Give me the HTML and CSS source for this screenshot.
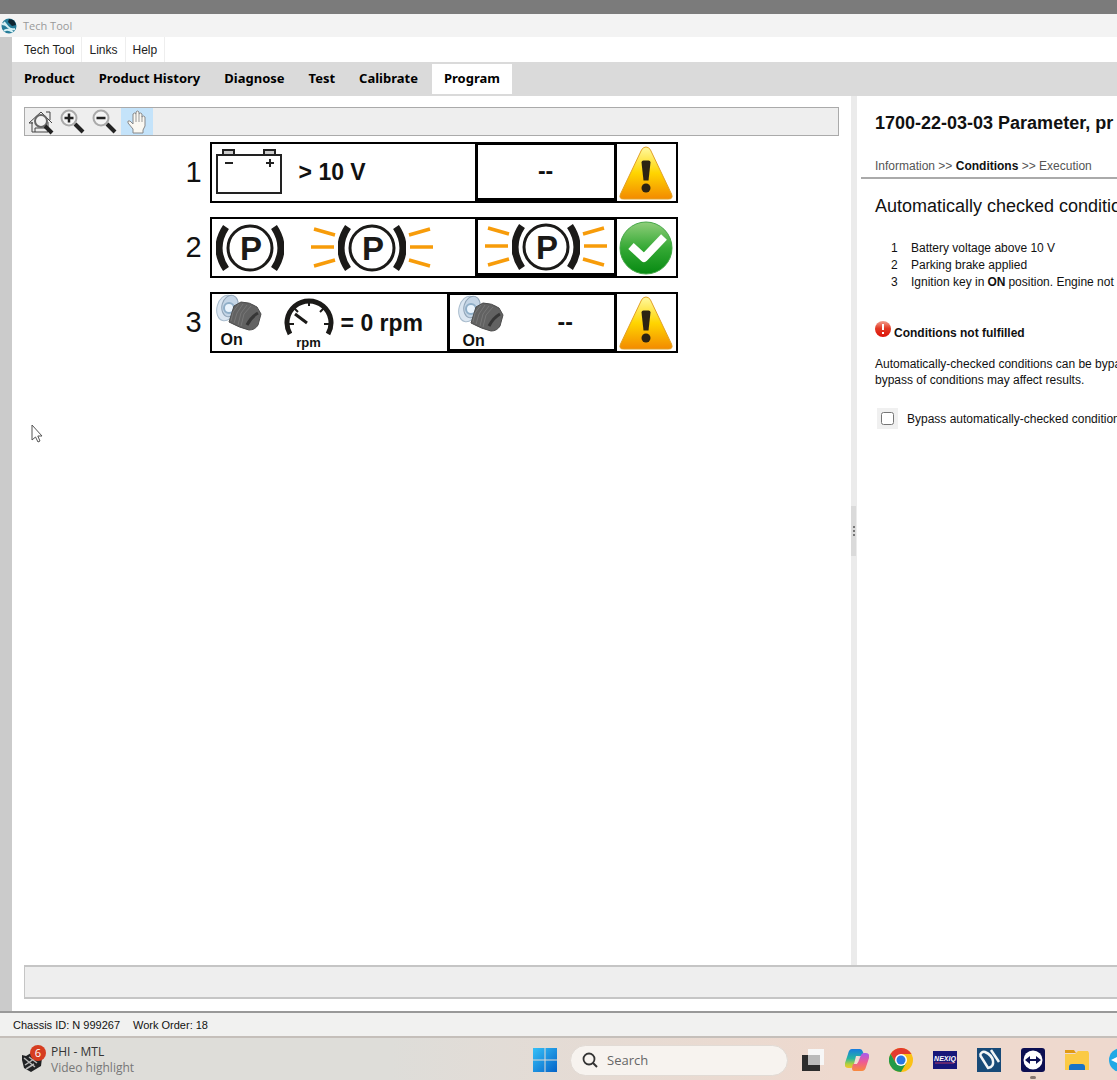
FILE: index.html
```html
<!DOCTYPE html>
<html lang="en">
  <head>
    <meta charset="UTF-8" />
    <meta name="viewport" content="width=device-width, initial-scale=1.0" />
    <title>Tech Tool</title>
    <link rel="stylesheet" href="styles.css">
  </head>
  <body>
    <!-- shared drawings -->
    <svg class="defs" width="0" height="0" aria-hidden="true">
      <defs>
        <linearGradient id="warnFill" x1="0" y1="0" x2="0" y2="1">
          <stop offset="0" stop-color="#fff9a0" />
          <stop offset="0.5" stop-color="#ffd500" />
          <stop offset="1" stop-color="#f38a00" />
        </linearGradient>
        <linearGradient id="okFill" x1="0" y1="0" x2="0" y2="1">
          <stop offset="0" stop-color="#8fce7a" />
          <stop offset="0.5" stop-color="#35a935" />
          <stop offset="1" stop-color="#078a12" />
        </linearGradient>
        <linearGradient id="redFill" x1="0" y1="0" x2="0" y2="1">
          <stop offset="0" stop-color="#f2a08f" />
          <stop offset="0.45" stop-color="#e33a25" />
          <stop offset="1" stop-color="#dc1208" />
        </linearGradient>
        <linearGradient id="winFill" x1="0" y1="0" x2="1" y2="1">
          <stop offset="0" stop-color="#36c0f7" />
          <stop offset="1" stop-color="#0463c8" />
        </linearGradient>
        <linearGradient id="copilotLeft" x1="0" y1="0" x2="0" y2="1">
          <stop offset="0" stop-color="#177be0" />
          <stop offset="0.5" stop-color="#27b5a0" />
          <stop offset="0.8" stop-color="#b5cf3c" />
          <stop offset="1" stop-color="#f7c52b" />
        </linearGradient>
        <linearGradient id="copilotRight" x1="0" y1="0" x2="0" y2="1">
          <stop offset="0" stop-color="#a45cf0" />
          <stop offset="0.5" stop-color="#ee5a94" />
          <stop offset="1" stop-color="#f98a3c" />
        </linearGradient>
        <symbol id="parking" viewBox="0 0 68 50">
          <circle cx="34" cy="25" r="22" fill="#fff" stroke="#1b1a18" stroke-width="3" />
          <path d="M10 4Q-4 25 10 46M58 4Q72 25 58 46" fill="none" stroke="#1b1a18" stroke-width="7" />
          <text x="35" y="37" text-anchor="middle" class="park-letter">P</text>
        </symbol>
        <symbol id="flashing" viewBox="0 0 122 50">
          <use href="#parking" x="27" y="0" width="68" height="50" />
          <path d="M3 6l21 6M0 24h23M3 43l21-6M119 6l-21 6M122 24h-23M119 43l-21-6" stroke="#f79c0a" stroke-width="3.500" />
        </symbol>
        <symbol id="ignition" viewBox="0 0 46 38">
          <ellipse cx="10" cy="14" rx="9" ry="13" transform="rotate(15 10 14)" fill="#dbe6f1" stroke="#a9bccd" />
          <ellipse cx="14" cy="12" rx="8" ry="11" transform="rotate(15 14 12)" fill="#c4d5e6" stroke="#8fa3b6" />
          <circle cx="13" cy="14" r="5" fill="#eaf4fd" stroke="#90afc8" stroke-width="2" />
          <path d="M18 12l7-4q9 0 16 5l4 7-3 11q-3 5-9 5-9-2-20-8z" fill="#626262" stroke="#4d4d4d" />
          <path d="M23 10l-6 8-2 9M27 10l-6 9-3 10M31 11l-6 8-3 12M35 12l-7 8-3 12" fill="none" stroke="#777" />
          <path d="M42 19q-7 4-11 12" fill="none" stroke="#363636" stroke-width="3" />
        </symbol>
        <symbol id="warning" viewBox="0 0 54 54">
          <path d="M27 1q3 0 4.500 3l21 44q2 5-3 5h-45q-5 0-3-5l21-44q1.500-3 4.500-3z" fill="url(#warnFill)" stroke="#e2a127" />
          <path d="M22.500 16.500q0-2 2-2h5q2 0 2 2l-2 18h-5z" fill="#2b2413" />
          <circle cx="27" cy="42" r="4.500" fill="#2b2413" />
        </symbol>
      </defs>
    </svg>

    <div class="backdrop"></div>
    <header class="titlebar">
      <svg width="16" height="16" viewBox="0 0 16 16" aria-hidden="true">
        <circle cx="8" cy="8" r="7.500" fill="#257b98" />
        <path d="M1 6q4 0 6 3t7 2M3 13q3-3 9 1M3 4l4 5" stroke="#d5f0f4" stroke-width="2" fill="none" />
        <path d="M8 1q6 0 7 6l-4 1-4-4z" fill="#102531" />
      </svg>
      <span>Tech Tool</span>
    </header>

    <div class="window">
      <nav class="menubar">
        <button type="button">Tech Tool</button>
        <button type="button">Links</button>
        <button type="button">Help</button>
      </nav>
      <nav class="tabs">
        <button type="button">Product</button>
        <button type="button">Product History</button>
        <button type="button">Diagnose</button>
        <button type="button">Test</button>
        <button type="button">Calibrate</button>
        <button type="button" class="active">Program</button>
      </nav>

      <main class="workspace">
        <section class="viewer">
          <div class="toolbar">
            <button type="button" aria-label="Fit to window">
              <svg width="26" height="26" viewBox="0 0 26 26">
                <path d="M1 14L13 3l11 11M4 13v10h16V13M18 3h4v8M1 14h4M7 23v-4h10" fill="none" stroke="#444" />
                <circle cx="13" cy="12" r="6" fill="#f3f3f3" stroke="#666" stroke-width="2" />
                <path d="M17 17l7 7" stroke="#222" stroke-width="4" />
              </svg>
            </button>
            <button type="button" aria-label="Zoom in">
              <svg width="26" height="26" viewBox="0 0 26 26">
                <circle cx="9" cy="9" r="7.500" fill="#f4f4f4" stroke="#aaa" stroke-width="2" />
                <path d="M4.500 9h9M9 4.500v9" stroke="#222" stroke-width="2.500" />
                <path d="M15 15l8 8" stroke="#222" stroke-width="4" />
              </svg>
            </button>
            <button type="button" aria-label="Zoom out">
              <svg width="26" height="26" viewBox="0 0 26 26">
                <circle cx="9" cy="9" r="7.500" fill="#f4f4f4" stroke="#aaa" stroke-width="2" />
                <path d="M4.500 9h9" stroke="#222" stroke-width="2.500" />
                <path d="M15 15l8 8" stroke="#222" stroke-width="4" />
              </svg>
            </button>
            <button type="button" class="selected" aria-label="Pan">
              <svg width="26" height="26" viewBox="0 0 26 26">
                <path d="M9 24v-4l-5-6q-1-3 2-2l3 3V5q1.500-2 3 0V3q1.500-2 3 0v2q1.500-2 3 0v3q1.500-2 3 0v9l-2 4v3z" fill="#faf8f2" stroke="#888" />
                <path d="M12 5v8M15 5v8M18 7v6" stroke="#999" />
              </svg>
            </button>
          </div>

          <div class="diagram">
            <div class="condition">
              <span class="number">1</span>
              <div class="strip">
                <div class="expected battery">
                  <svg width="66" height="48" viewBox="0 0 66 48" aria-hidden="true">
                    <path d="M7 6V1h11v5M48 6V1h11v5" fill="#ccc" stroke="#222" stroke-width="2" />
                    <path d="M1 6h64v38H1z" fill="#fff" stroke="#222" stroke-width="2" />
                    <path d="M9 14h8M50 14h8M54 10v8" stroke="#222" stroke-width="2" />
                  </svg>
                  <span>&gt; 10 V</span>
                </div>
                <div class="actual">--</div>
                <div class="state"><svg width="54" height="54"><use href="#warning" /></svg></div>
              </div>
            </div>

            <div class="condition">
              <span class="number">2</span>
              <div class="strip">
                <div class="expected brake">
                  <svg width="68" height="50"><use href="#parking" /></svg>
                  <svg width="122" height="50"><use href="#flashing" /></svg>
                </div>
                <div class="actual"><svg width="122" height="50"><use href="#flashing" /></svg></div>
                <div class="state">
                  <svg width="54" height="54" viewBox="0 0 54 54">
                    <circle cx="27" cy="27" r="26" fill="url(#okFill)" stroke="#45a747" />
                    <path d="M12 25l13 12 20-21" fill="none" stroke="#fff" stroke-width="8" stroke-linejoin="round" />
                  </svg>
                </div>
              </div>
            </div>

            <div class="condition">
              <span class="number">3</span>
              <div class="strip wide">
                <div class="expected engine">
                  <div class="key">
                    <svg width="46" height="38"><use href="#ignition" /></svg>
                    <span>On</span>
                  </div>
                  <div class="gauge">
                    <svg width="50" height="40" viewBox="0 0 50 40" aria-hidden="true">
                      <path d="M6 38A22 22 0 1 1 44 38" fill="none" stroke="#1b1a18" stroke-width="5" />
                      <path d="M25 4v6M10 12l4 4M40 12l-4 4M4 28h6M46 28h-6" stroke="#1b1a18" stroke-width="2" />
                      <path d="M11 18l12 9" stroke="#1b1a18" stroke-width="3" />
                    </svg>
                    <span>rpm</span>
                  </div>
                  <span>= 0 rpm</span>
                </div>
                <div class="actual">
                  <div class="key">
                    <svg width="46" height="38"><use href="#ignition" /></svg>
                    <span>On</span>
                  </div>
                  <span class="reading">--</span>
                </div>
                <div class="state"><svg width="54" height="54"><use href="#warning" /></svg></div>
              </div>
            </div>
          </div>
        </section>

        <div class="splitter"><div class="grip"><i></i><i></i><i></i></div></div>

        <aside class="details">
          <h1>1700-22-03-03 Parameter, pr</h1>
          <p class="steps"><a href="#">Information</a> &gt;&gt; <b>Conditions</b> &gt;&gt; <a href="#">Execution</a></p>
          <h2>Automatically checked conditio</h2>
          <ol>
            <li>Battery voltage above 10 V</li>
            <li>Parking brake applied</li>
            <li>Ignition key in <b>ON</b> position. Engine not</li>
          </ol>
          <p class="result">
            <svg width="16" height="16" viewBox="0 0 16 16" aria-hidden="true">
              <circle cx="8" cy="8" r="8" fill="url(#redFill)" />
              <path d="M8 3v6M8 11v2" stroke="#fff" stroke-width="2" />
            </svg>
            <b>Conditions not fulfilled</b>
          </p>
          <p class="note">Automatically-checked conditions can be bypa<br>bypass of conditions may affect results.</p>
          <div class="bypass">
            <span class="tick"><input type="checkbox" id="bypass"></span>
            <label for="bypass">Bypass automatically-checked condition</label>
          </div>
        </aside>
      </main>

      <div class="message"></div>
    </div>

    <footer class="status">
      <span>Chassis ID: N 999267</span>
      <span>Work Order: 18</span>
    </footer>

    <div class="taskbar">
      <a href="#" class="widget">
        <svg width="28" height="30" viewBox="0 0 28 30" aria-hidden="true">
          <path d="M2 10l4 1 5-3 7 1 4 4-1 8-10 6-7-4-2-8z" fill="#202224" />
          <path d="M4 13l11 9M5 20l12-8M9 12l8 6M6 24l8-5" stroke="#b8b8b8" stroke-width="1.500" />
          <circle cx="18" cy="8" r="8" fill="#d63d20" />
          <text x="18" y="12" text-anchor="middle">6</text>
        </svg>
        <span class="news">PHI - MTL<small>Video highlight</small></span>
      </a>
      <div class="apps">
        <button type="button" aria-label="Start">
          <svg width="24" height="24" viewBox="0 0 24 24"><path d="M0 0h11.500v11.500H0zM12.500 0H24v11.500H12.500zM0 12.500h11.500V24H0zM12.500 12.500H24V24H12.500z" fill="url(#winFill)" /></svg>
        </button>
        <div class="search">
          <svg width="16" height="16" viewBox="0 0 16 16" aria-hidden="true">
            <circle cx="7" cy="7" r="5.500" fill="none" stroke="#333" stroke-width="1.800" />
            <path d="M11 11l4 4" stroke="#333" stroke-width="2" />
          </svg>
          <input type="text" placeholder="Search" aria-label="Search">
        </div>
        <button type="button" aria-label="Task view">
          <svg width="24" height="24" viewBox="0 0 24 24"><path d="M1 7h18v16H1z" fill="#2c2c2c" /><path d="M7 1h16v16H7z" fill="#f7f7f7" /><path d="M7 7h12v10H7z" fill="#bababa" /></svg>
        </button>
        <button type="button" aria-label="Copilot">
          <svg width="24" height="24" viewBox="0 0 24 24">
            <path d="M7 1h8q2 0 3 3l1 4h-4q-3 0-4 4l-2 6q-1 2-3 2H3q-4 0-3-5l3-9q1-5 4-5z" fill="url(#copilotLeft)" />
            <path d="M17 23H9q-2 0-2-3l1-4h2q3 0 4-4l2-5q1-2 3-2h2q4 0 3 5l-3 9q-1 4-4 4z" fill="url(#copilotRight)" />
            <path d="M11 8h3l-2 8H9z" fill="#f1ddd3" />
          </svg>
        </button>
        <button type="button" aria-label="Chrome">
          <svg width="24" height="24" viewBox="0 0 24 24">
            <circle cx="12" cy="12" r="12" fill="#fbc116" />
            <path d="M1.600 6A12 12 0 0 1 22.400 6H12L6.800 15z" fill="#e33b2e" />
            <path d="M1.600 6A12 12 0 0 0 12 24L17.200 15H6.800z" fill="#229a49" />
            <circle cx="12" cy="12" r="6" fill="#fff" />
            <circle cx="12" cy="12" r="4.500" fill="#2b78e4" />
          </svg>
        </button>
        <button type="button" aria-label="Nexiq">
          <svg class="nexiq" width="24" height="24" viewBox="0 0 24 24"><path d="M0 3h24v18H0z" fill="#171779" /><text x="12" y="13" text-anchor="middle">NEXIQ</text><path d="M2 15h19" stroke="#b13a68" /></svg>
        </button>
        <button type="button" aria-label="Diagnostics">
          <svg width="24" height="24" viewBox="0 0 24 24"><path d="M0 0h24v24H0z" fill="#174a78" /><path d="M3 7l8 13q6-1 5-7T8 4q-3-1-5 3M14 2l8 12" fill="none" stroke="#f3f6f7" stroke-width="2.500" /></svg>
        </button>
        <button type="button" class="running" aria-label="Remote control">
          <svg width="24" height="24" viewBox="0 0 24 24"><rect width="24" height="24" rx="3" fill="#0b0f52" /><circle cx="12" cy="12" r="9.500" fill="#fff" /><path d="M4 12l5-4v3h6V8l5 4-5 4v-3H9v3z" fill="#0b0f52" /></svg>
        </button>
        <button type="button" aria-label="File explorer">
          <svg width="24" height="24" viewBox="0 0 24 24"><path d="M0 2h9l2 3h-11z" fill="#e09a15" /><path d="M0 6h10l3-3h10l1 2v17H0z" fill="#fbca45" /><path d="M4 22v-3q0-3 3-3h10q3 0 3 3v3z" fill="#1873c8" /></svg>
        </button>
        <button type="button" aria-label="Messages">
          <svg width="24" height="24" viewBox="0 0 24 24"><circle cx="12" cy="12" r="12" fill="#22a9e6" /><path d="M2 12l10-5v10z" fill="#fff" /></svg>
        </button>
      </div>
    </div>

    <svg class="cursor" width="12" height="19" viewBox="0 0 12 19" aria-hidden="true">
      <path d="M1 1v15l3.500-3 2.500 5 2-1-2.200-5H11z" fill="#fff" stroke="#555" />
    </svg>
  </body>
</html>
```
FILE: styles.css
```css
* {
  box-sizing: border-box;
}

body {
  margin: 0;
  min-height: 100vh;
  display: flex;
  flex-direction: column;
  overflow-x: hidden;
  background-color: #fff;
  color: #111;
  font-family: "Liberation Sans", Arial, sans-serif;
  font-size: 12px;
}

button {
  border: none;
  padding: 0;
  background: none;
  color: inherit;
  font: inherit;
  cursor: pointer;
}

svg {
  display: block;
  flex: none;
}

a {
  color: inherit;
  text-decoration: none;
}

.defs {
  position: absolute;
}

.park-letter {
  fill: #1b1a18;
  font: bold 33px "Liberation Sans", sans-serif;
}

.backdrop {
  height: 14px;
  background-color: #7b7b7b;
}

.titlebar {
  display: flex;
  align-items: center;
  gap: 6px;
  height: 23px;
  padding-left: 1px;
  background-color: #f3f3f3;
  color: #999;
  font-family: "Open Sans", sans-serif;
  font-size: 11px;
}

.window {
  flex: 1;
  display: flex;
  flex-direction: column;
  border-left: 12px solid #cbcbcb;
}

.menubar {
  display: flex;
  height: 25px;
  padding-left: 5px;
}

.menubar button {
  padding: 0 7px;
  border-right: 1px solid #eee;
  color: #222;
}

.tabs {
  display: flex;
  height: 34px;
  padding: 2px 0;
  background-color: #dadada;
  font-family: "Noto Sans", sans-serif;
  font-size: 13px;
  font-weight: bold;
}

.tabs button {
  padding: 0 12px 2px;
  color: #000;
}

.tabs .active {
  margin-left: 2px;
  background-color: #fff;
}

.workspace {
  flex: 1;
  display: grid;
  grid-template-columns: minmax(0, 1fr) 6px 260px;
}

.viewer {
  padding: 11px 12px;
}

.toolbar {
  display: flex;
  height: 29px;
  border: 1px solid #aaa;
  background-color: #eee;
}

.toolbar button {
  display: flex;
  align-items: center;
  justify-content: center;
  width: 32px;
}

.toolbar .selected {
  background-color: #c4e3fa;
}

.diagram {
  display: flex;
  flex-direction: column;
  align-items: center;
  gap: 14px;
  margin-top: 6px;
}

.condition {
  display: flex;
  align-items: center;
  gap: 8px;
}

.number {
  font-size: 29px;
}

.strip {
  display: grid;
  grid-template-columns: 263px 142px 59px;
  width: 468px;
  height: 61px;
  border: 2px solid #000;
  font-size: 23px;
  font-weight: bold;
}

.strip.wide {
  grid-template-columns: 235px 170px 59px;
}

.expected,
.actual,
.state {
  display: flex;
  align-items: center;
}

.expected {
  padding-left: 4px;
}

.actual {
  justify-content: center;
  border: solid #000;
  border-width: 1px 3px 3px;
}

.state {
  justify-content: center;
}

.battery {
  gap: 17px;
}

.brake {
  gap: 27px;
}

.engine {
  gap: 7px;
}

.key,
.gauge {
  align-self: stretch;
  display: flex;
  flex-direction: column;
  font-size: 16px;
  line-height: 16px;
}

.key span {
  padding-left: 5px;
}

.gauge {
  align-items: center;
  margin-left: 15px;
  padding-top: 2px;
  font-size: 13px;
  line-height: 13px;
}

.wide .actual {
  justify-content: flex-start;
  padding-left: 8px;
}

.reading {
  margin-left: 54px;
}

.splitter {
  display: flex;
  align-items: center;
  background-color: #ebebeb;
}

.grip {
  display: flex;
  flex-direction: column;
  align-items: center;
  justify-content: center;
  gap: 2px;
  width: 5px;
  height: 50px;
  background-color: #dadada;
}

.grip i {
  width: 2px;
  height: 2px;
  background-color: #777;
}

.details {
  padding-left: 18px;
  white-space: nowrap;
  overflow: hidden;
}

h1 {
  margin: 16px 0 0;
  font-size: 18px;
  line-height: 22px;
}

.steps {
  margin: 24px 0 0 -14px;
  padding: 0 0 3px 14px;
  border-bottom: 2px solid #aaa;
  line-height: 16px;
  color: #555;
}

.steps b {
  color: #111;
}

h2 {
  margin: 16px 0 23px;
  font-size: 18px;
  font-weight: normal;
  line-height: 22px;
}

ol {
  margin: 0;
  padding: 0;
  list-style: none;
  counter-reset: step;
  line-height: 17px;
}

li {
  display: flex;
  gap: 3px;
  counter-increment: step;
}

li::before {
  content: counter(step);
  width: 17px;
  margin-left: 16px;
}

.result {
  display: flex;
  gap: 3px;
  margin: 30px 0 0;
}

.result b {
  padding-top: 4px;
  line-height: 16px;
}

.note {
  margin: 15px 0 20px;
  line-height: 16px;
}

.bypass {
  display: flex;
  align-items: center;
  gap: 9px;
}

.tick {
  display: flex;
  padding: 4px;
  margin-left: 2px;
  background-color: #f0f0f0;
}

.tick input {
  width: 13px;
  height: 13px;
  margin: 0;
}

.message {
  height: 34px;
  margin: 0 0 12px 12px;
  border: solid #c5c5c5;
  border-width: 2px 0 2px 1px;
  background-color: #eee;
}

.status {
  display: flex;
  align-items: center;
  gap: 13px;
  height: 25px;
  padding-left: 13px;
  border-top: 2px solid #999;
  background-color: #f1f1f0;
  font-size: 11px;
}

.taskbar {
  display: flex;
  align-items: center;
  justify-content: space-between;
  height: 44px;
  padding-top: 2px;
  border-top: 2px solid #c5bfba;
  background: linear-gradient(to right, #deddd9 35%, #eed9ce 75%);
  font-family: "Open Sans", sans-serif;
  overflow: hidden;
}

.widget {
  display: flex;
  align-items: center;
  gap: 3px;
  padding-left: 20px;
  color: #333;
}

.widget text {
  fill: #fff;
  font-size: 11px;
}

.news {
  line-height: 16px;
}

.news small {
  display: block;
  font-size: 12px;
  color: #777;
}

.apps {
  display: flex;
  align-items: center;
  gap: 20px;
  margin-right: -16px;
}

.search {
  display: flex;
  align-items: center;
  gap: 9px;
  width: 218px;
  height: 31px;
  margin: 0 -7px;
  padding: 0 11px;
  border: 1px solid #e2dbd5;
  border-radius: 16px;
  background-color: #f7f3ef;
}

.search input {
  width: 100%;
  border: none;
  padding: 0;
  background: none;
  font: 13px "Open Sans", sans-serif;
}

.search input::placeholder {
  color: #666;
}

.nexiq text {
  fill: #fff;
  font: italic bold 7px "Liberation Sans", sans-serif;
}

.running {
  position: relative;
}

.running::after {
  content: "";
  position: absolute;
  left: 9px;
  bottom: -7px;
  width: 6px;
  height: 3px;
  border-radius: 2px;
  background-color: #85766f;
}

.cursor {
  position: absolute;
  left: 31px;
  top: 424px;
}
```
